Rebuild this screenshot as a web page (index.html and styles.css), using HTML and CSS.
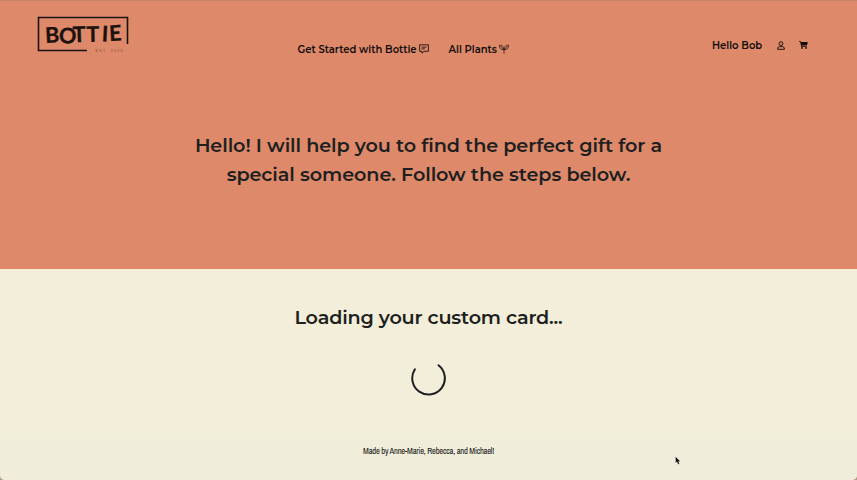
FILE: index.html
```html
<!DOCTYPE html>
<html lang="en">
<head>
<meta charset="utf-8">
<title>Bottie</title>
<link rel="stylesheet" href="styles.css">
</head>
<body>
<div class="page">
  <header class="top">
    <svg class="logo" viewBox="0 0 92 38" role="img" aria-label="Bottie">
      <path d="M50 34.5H1.5V1.5H90.5V28" fill="none" stroke="#1b110d" stroke-width="1.6"/>
      <text class="logo-name" x="8.5 21.5 36 49.5 64.5 72.5" y="27 26.8 26.3 26 25.2 25" rotate="-3 4 -2 -1 3 -3">BOTTIE</text>
      <text class="logo-est" x="58.5" y="36" textLength="27">EST. 2020</text>
    </svg>
    <nav class="nav">
      <a class="link start"><span>Get Started with Bottie</span>
        <svg class="icon" viewBox="0 0 10 10"><path d="M.6.8h8.8v6.5H5L3 9.2V7.3H.6zM2.5 3.1h5M2.5 4.9h3.3" fill="none" stroke="currentColor" stroke-width=".85"/></svg></a>
      <a class="link plants"><span>All Plants</span>
        <svg class="icon" viewBox="0 0 10 10"><path d="M5 9.7V4.8M5 5.8C1.5 5.8.5 4 .4 1.1 3.2 1 4.8 2.6 5 5.8ZM5 5.8C5.2 2.6 6.7 1 9.6 1.1 9.5 4 8.5 5.8 5 5.8ZM1.5 2.2 5 5.8 8.5 2.2" fill="none" stroke="currentColor" stroke-width=".65"/></svg></a>
    </nav>
    <div class="account">
      <span class="hello">Hello Bob</span>
      <svg class="user" viewBox="0 0 8 9"><circle cx="4" cy="2.6" r="1.9" fill="none" stroke="currentColor" stroke-width=".9"/><path d="M.6 8.3C.6 6.2 1.5 5.6 2.8 5.6h2.4C6.5 5.6 7.4 6.2 7.4 8.3Z" fill="none" stroke="currentColor" stroke-width=".9"/></svg>
      <svg class="cart" viewBox="0 0 9 8"><path d="M0 .2h1.8l.3.9H8.8L8 4.6H2.9l.1.6h4.7v.7H2.3L1.2 1H0z" fill="currentColor"/><circle cx="3.1" cy="6.9" r=".9" fill="currentColor"/><circle cx="7.1" cy="6.9" r=".9" fill="currentColor"/></svg>
    </div>
  </header>
  <section class="hero">
    <h1><span class="line">Hello! I will help you to find the perfect gift for a</span><span class="line">special someone. Follow the steps below.</span></h1>
  </section>
  <main class="loading">
    <h2>Loading your custom card...</h2>
    <svg class="spinner" viewBox="0 0 36 36"><path d="M27.5 4.3A16.3 16.3 0 1 1 3.9 8.3" fill="none" stroke="#1c1e20" stroke-width="2" stroke-linecap="round"/></svg>
  </main>
  <footer>Made by Anne-Marie, Rebecca, and Michael!</footer>
</div>
<svg class="pointer" viewBox="0 0 6 9"><path d="M.5.5v6.6l1.5-1.3 1 2.6 1.4-.6-1-2.4h2z" fill="#080808" stroke="#fff" stroke-width=".3"/></svg>
</body>
</html>
```
FILE: styles.css
```css
* { box-sizing: border-box; }
body { margin: 0; background: #b59b85; font-family: Montserrat, Inter, sans-serif; color: #1d1f20; }
.page { height: 480px; overflow: hidden; border-radius: 0 0 5px 5px; background: #f3eed9; display: flex; flex-direction: column; border-top: 1px solid #c98168; }
.top { height: 72px; background: #de896a; display: grid; grid-template-columns: 297.5px 1fr 145px; color: #120d0b; font-size: 10px; font-weight: 600; line-height: 14px; white-space: nowrap; }
.logo { width: 92px; height: 38px; margin: 15px 0 0 37px; }
.logo-name { font: 700 21.5px Lato, sans-serif; fill: #1b110d; stroke: #1b110d; stroke-width: .35; stroke-linejoin: round; }
.logo-est { font: 3.5px "Liberation Sans", sans-serif; fill: #1b110d; opacity: .55; }
.nav { display: flex; gap: 20px; padding-top: 41px; }
.link { display: flex; height: 14px; align-items: center; gap: 3px; }
.link span, .hello { position: relative; top: 1px; }
.icon { width: 10px; height: 10px; flex: none; }
.start span { width: 118px; }
.plants span { width: 47.5px; }
.account { display: flex; align-items: center; height: 14px; margin-top: 37px; }
.hello { width: 50px; }
.user { width: 8px; height: 9px; margin-left: 15px; }
.cart { width: 9px; height: 8px; margin-left: 14px; }
.hero { height: 196px; background: #de896a; padding-top: 58px; }
h1, h2 { margin: 0; font-size: 19.2px; font-weight: 600; line-height: 29px; text-align: center; letter-spacing: -.09px; }
h2 { letter-spacing: -.18px; }
.line { display: block; white-space: nowrap; }
.loading { height: 166px; padding-top: 34px; display: flex; flex-direction: column; align-items: center; }
.spinner { width: 36px; height: 36px; margin-top: 29px; }
footer { flex: 1; background: #f0eeda; text-align: center; padding-top: 9px; font: 8.5px/15px "Liberation Sans Narrow", "Archivo Narrow", sans-serif; letter-spacing: -.22px; color: #141414; }
.pointer { position: absolute; left: 675px; top: 456px; width: 6px; height: 9px; }
```
